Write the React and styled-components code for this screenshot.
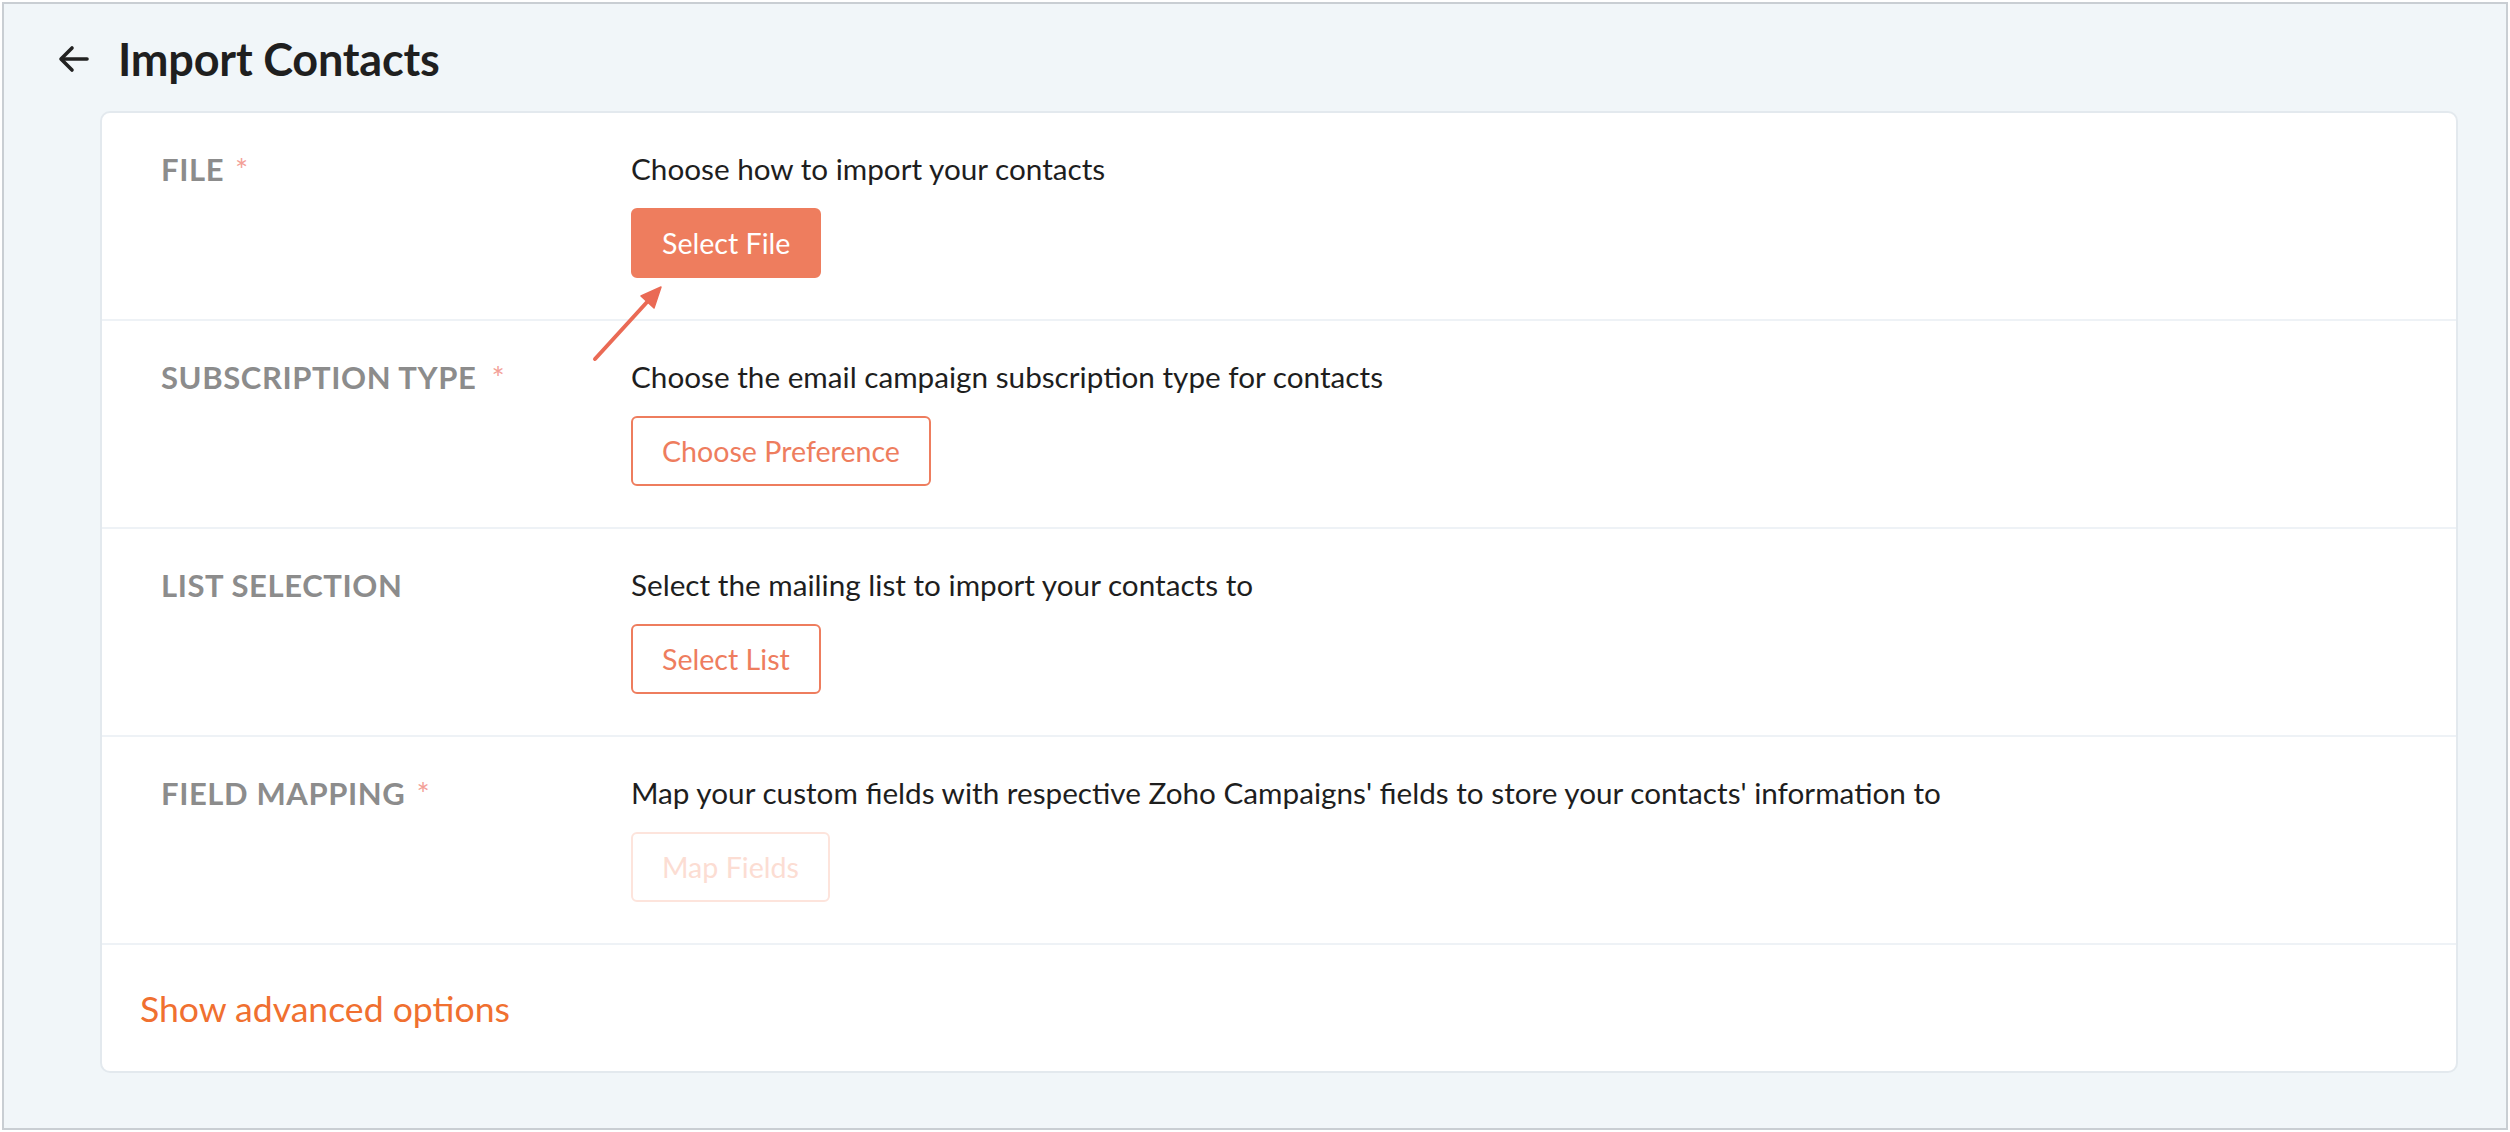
import styled, { createGlobalStyle } from "styled-components";

const GlobalStyle = createGlobalStyle`
    html, body {
        margin: 0;
        padding: 0;
        background: #ffffff;
    }
    body {
        font-family: Lato, "Open Sans", Arial, sans-serif;
        -webkit-font-smoothing: antialiased;
    }
`;

// Page frame and header
const Frame = styled.div`
    box-sizing: border-box;
    margin: 2px 2px 0 2px;
    height: 1128px;
    border: 2px solid #c9ced3;
    background: #f1f6f9;
    padding: 0 48px 0 96px;
    display: flex;
    flex-direction: column;
`;

const Header = styled.div`
    display: flex;
    align-items: center;
    height: 107px;
    margin-left: -44px;
    gap: 26px;
    padding-top: 2px;
    box-sizing: border-box;
`;

const BackButton = styled.button`
    display: flex;
    align-items: center;
    justify-content: center;
    width: 36px;
    height: 36px;
    padding: 0;
    border: none;
    background: transparent;
    color: #222;
    cursor: pointer;
`;

const Title = styled.h1`
    margin: 0;
    font-size: 45px;
    font-weight: 700;
    color: #1f1f1f;
    line-height: 1.2;
    letter-spacing: -0.2px;
`;

// Card with form rows
const Card = styled.div`
    background: #ffffff;
    border: 2px solid #e3e9ee;
    border-radius: 10px;
    display: flex;
    flex-direction: column;
`;

const Row = styled.div`
    display: grid;
    grid-template-columns: 470px 1fr;
    padding: 35px 60px 41px 59px;
    border-bottom: 2px solid #eef2f6;
`;

const Label = styled.div`
    font-size: 31px;
    font-weight: 700;
    color: #8c8c8c;
    line-height: 42px;
    text-transform: uppercase;
    letter-spacing: 0.6px;
`;

const Required = styled.span`
    color: #f3a097;
    font-weight: 400;
    margin-left: ${props => props.wide ? "15px" : "11px"};
`;

const Field = styled.div`
    display: flex;
    flex-direction: column;
    align-items: flex-start;
    gap: 18px;
`;

const Description = styled.p`
    margin: 0;
    font-size: 29.7px;
    line-height: 42px;
    color: #1e1e1e;
`;

const Button = styled.button`
    box-sizing: border-box;
    height: 70px;
    padding: 0 29px;
    font-family: inherit;
    font-size: 28.6px;
    border-radius: 6px;
    cursor: pointer;
    border: 2px solid ${props => props.disabled ? "#fde4dc" : "#ee7d5e"};
    background: ${props => props.primary ? "#ee7d5e" : "#ffffff"};
    color: ${props => props.primary ? "#ffffff" : props.disabled ? "#fcddd3" : "#ee7d5e"};
    &:disabled {
        cursor: not-allowed;
    }
`;

const Footer = styled.div`
    display: flex;
    align-items: center;
    height: 126px;
    padding-left: 38px;
`;

const AdvancedLink = styled.a`
    font-size: 35.6px;
    color: #f07030;
    text-decoration: none;
    cursor: pointer;
`;

// Hint arrow pointing at the file button
const ButtonWrap = styled.div`
    position: relative;
`;

const Pointer = styled.svg`
    position: absolute;
    left: -40px;
    top: 75px;
    overflow: visible;
`;

const ArrowLeft = () => (
    <svg width="32" height="28" viewBox="0 0 32 28" fill="none" stroke="currentColor" strokeWidth="3.6" strokeLinecap="round" strokeLinejoin="round">
        <path d="M29 14H4" />
        <path d="M14 3L3 14l11 11" />
    </svg>
);

const rows = [
    {
        label: "File",
        required: true,
        text: "Choose how to import your contacts",
        button: "Select File",
        primary: true,
        pointer: true,
    },
    {
        label: "Subscription Type",
        required: true,
        wide: true,
        text: "Choose the email campaign subscription type for contacts",
        button: "Choose Preference",
    },
    {
        label: "List Selection",
        text: "Select the mailing list to import your contacts to",
        button: "Select List",
    },
    {
        label: "Field Mapping",
        required: true,
        text: "Map your custom fields with respective Zoho Campaigns' fields to store your contacts' information to",
        button: "Map Fields",
        disabled: true,
    },
];

const App = () => {
    return (
        <>
            <GlobalStyle />
            <Frame>
                <Header>
                    <BackButton aria-label="Back">
                        <ArrowLeft />
                    </BackButton>
                    <Title>Import Contacts</Title>
                </Header>

                <Card>
                    {rows.map((row) => (
                        <Row key={row.label}>
                            <Label>
                                {row.label}
                                {row.required && <Required wide={row.wide}>*</Required>}
                            </Label>
                            <Field>
                                <Description>{row.text}</Description>
                                <ButtonWrap>
                                    <Button primary={row.primary} disabled={row.disabled}>
                                        {row.button}
                                    </Button>
                                    {row.pointer && (
                                        <Pointer width="80" height="80" viewBox="0 0 80 80">
                                            <path d="M4 76L57 18" stroke="#ea6a55" strokeWidth="4" strokeLinecap="round" />
                                            <path d="M70 4L63 25L50 13Z" fill="#ea6a55" stroke="#ea6a55" strokeWidth="1.5" strokeLinejoin="round" />
                                        </Pointer>
                                    )}
                                </ButtonWrap>
                            </Field>
                        </Row>
                    ))}
                    <Footer>
                        <AdvancedLink>Show advanced options</AdvancedLink>
                    </Footer>
                </Card>
            </Frame>
        </>
    );
};

export default App;
